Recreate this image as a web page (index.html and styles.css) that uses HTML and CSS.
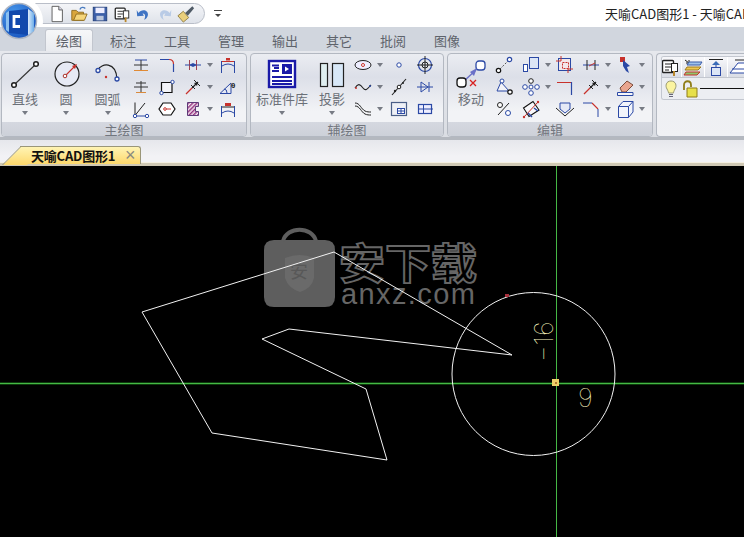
FILE: index.html
```html
<!DOCTYPE html>
<html lang="zh">
<head>
<meta charset="utf-8">
<title>天喻CAD图形1 - 天喻CAD</title>
<link rel="stylesheet" href="styles.css">
</head>
<body>
<div class="app">
  <div class="logo">
    <svg width="46" height="42" viewBox="0 0 46 42">
      <defs>
        <radialGradient id="orb" cx="35%" cy="30%" r="80%"><stop offset="0" stop-color="#4a9aec"/><stop offset="1" stop-color="#1450bc"/></radialGradient>
        <linearGradient id="side" x1="0" y1="0" x2="1" y2="0"><stop offset="0" stop-color="#dcebfb"/><stop offset="1" stop-color="#6faee8"/></linearGradient>
        <pattern id="hatch" width="3" height="3" patternUnits="userSpaceOnUse" patternTransform="rotate(45)"><rect width="3" height="3" fill="#f4eaf2"/><rect width="1.500" height="3" fill="#93307f"/></pattern>
      </defs>
      <path d="M30.600 0A24 24 0 0 1 42.200 27H0V0Z" fill="#fff"/>
      <circle cx="19" cy="21" r="17.500" fill="url(#orb)" stroke="#aeb6c4" stroke-width="1.500"/>
      <path d="M6 13L9 11V32L6 30Z" fill="#8cc0ef"/>
      <path d="M9 11L28 9V35L9 33Z" fill="#1249ad"/>
      <path d="M28 9L34 13V31L28 35Z" fill="url(#side)"/>
      <path d="M20 16.500H14V26.500H20" fill="none" stroke="#fff" stroke-width="2.800"/>
    </svg>
  </div>
  <header class="title-bar">
    <div class="qat">
      <svg viewBox="0 0 20 20"><path d="M4.500 1.500H12L16 5.500V18.500H4.500Z" fill="#fff" stroke="#555"/><path d="M12 1.500V5.500H16" fill="#dde" stroke="#555"/></svg>
      <svg viewBox="0 0 20 20"><path d="M2 6H7L9 8H15V17H2Z" fill="#d9a63c" stroke="#8d6a1d"/><path d="M4 17L7 10H19L16 17Z" fill="#f5d57a" stroke="#8d6a1d"/><path d="M11 5C12 2 15 2 17 4" fill="none" stroke="#4a7cc0" stroke-width="1.500"/></svg>
      <svg viewBox="0 0 20 20"><rect x="2.500" y="2.500" width="15" height="15" fill="#3c5fa8" stroke="#24407c"/><rect x="5" y="3" width="10" height="6" fill="#eef"/><rect x="6" y="12" width="8" height="5" fill="#bcc7dc"/></svg>
      <svg viewBox="0 0 20 20"><rect x="2.500" y="3.500" width="11" height="12" rx="1" fill="#fff" stroke="#222" stroke-width="1.400"/><path d="M5 7H11M5 10H11M5 13H9" stroke="#222"/><rect x="11.500" y="6.500" width="6" height="8" fill="#fff" stroke="#222"/><path d="M14 14V19" stroke="#b8862b" stroke-width="2"/></svg>
      <svg viewBox="0 0 20 20"><path d="M5 9C8 4 16 5 15.500 11C15 14 13 16 11 16.500C13 14 13 9 9.500 9.500L11 12L3.500 12.500L3 5.500Z" fill="#3f74c4"/></svg>
      <svg viewBox="0 0 20 20"><path d="M15 9C12 4 4 5 4.500 11C5 14 7 16 9 16.500C7 14 7 9 10.500 9.500L9 12L16.500 12.500L17 5.500Z" fill="#b9cbe6"/></svg>
      <svg viewBox="0 0 20 20"><path d="M1 12L7 7L13 14L7 19Z" fill="#e9cf7c" stroke="#8f7d42"/><path d="M9 9L17 1.500L19 3.500L12 12Z" fill="#4f5a66"/></svg>
    </div>
    <span class="qat-more"><span class="qat-caret"></span></span>
    <h1 class="title">天喻CAD图形1 - 天喻CAD</h1>
  </header>
  <nav class="tabs">
    <span class="tab active">绘图</span>
    <span class="tab">标注</span>
    <span class="tab">工具</span>
    <span class="tab">管理</span>
    <span class="tab">输出</span>
    <span class="tab">其它</span>
    <span class="tab">批阅</span>
    <span class="tab">图像</span>
  </nav>
  <section class="ribbon">
    <div class="group g1">
      <div class="group-body">
        <div class="big w46">
          <svg width="36" height="32" viewBox="0 0 36 32"><path d="M8 25L28 6" stroke="#333" stroke-width="1.100"/><circle cx="29" cy="5" r="2.300" fill="#fff" stroke="#222" stroke-width="1.500"/><circle cx="7" cy="26" r="2.300" fill="#fff" stroke="#222" stroke-width="1.500"/></svg>
          <span class="big-label">直线</span><span class="caret"></span>
        </div>
        <div class="big w36">
          <svg width="36" height="32" viewBox="0 0 36 32"><circle cx="19" cy="15" r="12" fill="#e6e9f4" stroke="#222" stroke-width="1.200"/><path d="M18 16L27 7" stroke="#c8322c" stroke-width="1.100"/><path d="M29 5L24 7L27 10Z" fill="#c8322c"/><circle cx="17" cy="17" r="1.800" fill="#fff" stroke="#a8332c"/></svg>
          <span class="big-label">圆</span><span class="caret"></span>
        </div>
        <div class="big w47">
          <svg width="36" height="32" viewBox="0 0 36 32"><path d="M8 11C11 4 26 2 27 20" fill="none" stroke="#222" stroke-width="1.200"/><circle cx="8" cy="11.500" r="2" fill="#fff" stroke="#2b49a5" stroke-width="1.300"/><circle cx="27" cy="20" r="2" fill="#fff" stroke="#2b49a5" stroke-width="1.300"/><circle cx="16" cy="18" r="1.200" fill="#c8322c"/></svg>
          <span class="big-label">圆弧</span><span class="caret"></span>
        </div>
        <div class="tools tools-g1">
          <div class="t"><svg width="20" height="20" viewBox="0 0 20 20"><path d="M4 5H16" stroke="#2b49a5"/><path d="M3 10H17M10 5V15" stroke="#333"/><path d="M3 15.500H17" stroke="#e08a35" stroke-width="1.200"/></svg></div>
          <div class="t"><svg width="20" height="20" viewBox="0 0 20 20"><path d="M3 4.500H12" stroke="#2b49a5" stroke-width="1.200"/><path d="M12 4.500Q16.500 4.500 16.500 9" fill="none" stroke="#c8322c" stroke-width="1.200"/><path d="M16.500 9V17" stroke="#2b49a5" stroke-width="1.200"/></svg></div>
          <div class="t"><svg width="20" height="20" viewBox="0 0 20 20"><path d="M2 10H18" stroke="#2b49a5"/><path d="M6.500 5V15M13.500 5V15" stroke="#a04050"/><path d="M6 10L10 8V12ZM14 10L10 8V12Z" fill="#2b49a5"/></svg><span class="caret"></span></div>
          <div class="t"><svg width="20" height="20" viewBox="0 0 20 20"><path d="M3.500 6V18M16.500 6V18" stroke="#2b49a5"/><path d="M4 11Q10 7 16 11" fill="none" stroke="#2b49a5"/><path d="M4 6.500H16" stroke="#c8322c"/><rect x="8" y="3" width="4" height="2.500" fill="#c8322c"/></svg></div>
          <div class="t"><svg width="20" height="20" viewBox="0 0 20 20"><path d="M5 6H15M3 10H17" stroke="#333"/><path d="M10 4V15" stroke="#333"/><path d="M5 15.500H15" stroke="#d98a3c" stroke-width="1.200"/></svg></div>
          <div class="t"><svg width="20" height="20" viewBox="0 0 20 20"><path d="M4.500 5.500H15V15.500H4.500Z" fill="#f2f3f8" stroke="#111" stroke-width="1.200"/><circle cx="15.500" cy="5" r="1.700" fill="#fff" stroke="#2b49a5"/><circle cx="4.500" cy="16" r="1.700" fill="#fff" stroke="#2b49a5"/></svg></div>
          <div class="t"><svg width="20" height="20" viewBox="0 0 20 20"><path d="M3 17L9 11" stroke="#c8322c" stroke-width="1.200"/><path d="M9 11L15 5" stroke="#222" stroke-width="1.200"/><path d="M11 3L17 9M8 8L12 12" stroke="#222"/><path d="M15 5L11 6L14 9Z" fill="#222"/></svg><span class="caret"></span></div>
          <div class="t"><svg width="20" height="20" viewBox="0 0 20 20"><path d="M2 16.500L13 6V16.500Z" fill="#e6e9f4" stroke="#2b49a5"/><path d="M9 16Q9 12 6 12" fill="none" stroke="#2b49a5"/><text class="theta" x="13" y="11">θ</text></svg></div>
          <div class="t"><svg width="20" height="20" viewBox="0 0 20 20"><path d="M4 3.500V16.500L14 4" fill="none" stroke="#222"/><path d="M5 17H15" stroke="#2b49a5"/><circle cx="4" cy="17" r="1.700" fill="#fff" stroke="#2b49a5"/><circle cx="16" cy="17" r="1.700" fill="#fff" stroke="#2b49a5"/></svg></div>
          <div class="t"><svg width="20" height="20" viewBox="0 0 20 20"><path d="M6 4H14L18 10L14 16H6L2 10Z" fill="#fff" stroke="#111" stroke-width="1.200"/><path d="M8 10H14" stroke="#c8322c"/><circle cx="8" cy="10" r="1.300" fill="#fff" stroke="#c8322c"/></svg></div>
          <div class="t"><svg width="20" height="20" viewBox="0 0 20 20"><path d="M4.500 3.500H15.500V7.500H12.500V12.500H15.500V16.500H4.500Z" fill="url(#hatch)" stroke="#5d3a78"/></svg><span class="caret"></span></div>
          <div class="t"><svg width="20" height="20" viewBox="0 0 20 20"><path d="M3.500 7V18M16.500 7V18" stroke="#2b49a5"/><path d="M4 8H16" stroke="#222"/><path d="M4 14Q10 10 16 14" fill="none" stroke="#2b49a5"/><rect x="7" y="4" width="6" height="3" fill="#c8322c"/></svg></div>
        </div>
      </div>
      <div class="group-label">主绘图</div>
    </div>
    <div class="group g2">
      <div class="group-body">
        <div class="big w62">
          <svg width="36" height="32" viewBox="0 0 36 32"><rect x="5" y="2" width="26" height="26" fill="#fff" stroke="#1a1aa8" stroke-width="2.400"/><path d="M8 6.500H15M8 12H15M10 9H15M8 18H28M8 22H28M8 25H28" fill="none" stroke="#1a1aa8" stroke-width="2.200"/><path d="M18 5H28V15H18ZM21 7.500V12.500L25 10Z" fill="#1a1aa8" fill-rule="evenodd"/></svg>
          <span class="big-label">标准件库</span><span class="caret"></span>
        </div>
        <div class="big w38">
          <svg width="36" height="32" viewBox="0 0 36 32"><rect x="6.500" y="4.500" width="7" height="23" fill="#dfeef0" stroke="#222" stroke-width="1.200"/><rect x="18.500" y="4.500" width="11" height="23" fill="#d8e8f8" stroke="#222" stroke-width="1.200"/></svg>
          <span class="big-label">投影</span><span class="caret"></span>
        </div>
        <div class="tools tools-g2">
          <div class="t"><svg width="20" height="20" viewBox="0 0 20 20"><ellipse cx="10" cy="10" rx="8" ry="4.500" fill="#eef" stroke="#222"/><circle cx="10" cy="10" r="1.500" fill="#fff" stroke="#c8322c"/></svg><span class="caret"></span></div>
          <div class="t"><svg width="20" height="20" viewBox="0 0 20 20"><circle cx="10" cy="10" r="2.200" fill="#fff" stroke="#2b49a5"/></svg></div>
          <div class="t"><svg width="20" height="20" viewBox="0 0 20 20"><circle cx="10" cy="10" r="6.500" fill="none" stroke="#2b49a5" stroke-width="1.200"/><circle cx="10" cy="10" r="3" fill="none" stroke="#222"/><path d="M10 1V19M2 10H18" stroke="#222"/></svg></div>
          <div class="t"><svg width="20" height="20" viewBox="0 0 20 20"><path d="M2 11C5 6 7 7 10 11C13 15 15 11 18 8" fill="none" stroke="#222" stroke-width="1.100"/><circle cx="3" cy="11" r="1" fill="#c8322c"/><circle cx="17" cy="9" r="1" fill="#2b49a5"/></svg><span class="caret"></span></div>
          <div class="t"><svg width="20" height="20" viewBox="0 0 20 20"><path d="M3 18L17 2" stroke="#222" stroke-width="1.100"/><circle cx="10" cy="10" r="1.800" fill="#fff" stroke="#222"/><circle cx="14" cy="6" r="1" fill="#222"/><circle cx="6" cy="14" r="1.200" fill="#222"/></svg></div>
          <div class="t"><svg width="20" height="20" viewBox="0 0 20 20"><path d="M2 10H18" stroke="#2b49a5"/><path d="M6 5L13 10L6 15ZM14 5V15" fill="none" stroke="#2b49a5"/></svg></div>
          <div class="t"><svg width="20" height="20" viewBox="0 0 20 20"><path d="M2 4C7 4 8 10 12 12C14 13 16 13 18 13M2 7C7 7 8 13 12 15C14 16 16 16 18 16" fill="none" stroke="#222"/></svg><span class="caret"></span></div>
          <div class="t"><svg width="20" height="20" viewBox="0 0 20 20"><rect x="2.500" y="3.500" width="15" height="13" fill="#eef0f6" stroke="#4b5f88" stroke-width="1.200"/><rect x="8.500" y="9.500" width="7" height="5" fill="#fff" stroke="#2b49a5"/><path d="M9 12H15M12 10V14" stroke="#2b49a5"/></svg></div>
          <div class="t"><svg width="20" height="20" viewBox="0 0 20 20"><rect x="3.500" y="5.500" width="13" height="9" fill="#eef" stroke="#2b49a5" stroke-width="1.200"/><path d="M3 10H18M8.500 5V15" stroke="#2b49a5"/></svg></div>
        </div>
      </div>
      <div class="group-label">辅绘图</div>
    </div>
    <div class="group g3">
      <div class="group-body">
        <div class="big w46">
          <svg width="36" height="32" viewBox="0 0 36 32"><rect x="23" y="2" width="9" height="9" rx="3" fill="#fff" stroke="#2b49a5" stroke-width="1.300"/><path d="M11 22L23 11" stroke="#6a70c8" stroke-width="1.400"/><path d="M24 9L17 13L21 17Z" fill="#6a70c8"/><rect x="4" y="19" width="9" height="9" rx="3" fill="#fff" stroke="#111" stroke-width="1.300"/><path d="M17 21L23 27M23 21L17 27" stroke="#d82020" stroke-width="1.300"/></svg>
          <span class="big-label">移动</span><span class="caret hidden"></span>
        </div>
        <div class="tools tools-g3">
          <div class="t"><svg width="20" height="20" viewBox="0 0 20 20"><path d="M6 14L14 6" stroke="#555" stroke-dasharray="2 1.500"/><circle cx="4.500" cy="15.500" r="2.200" fill="#fff" stroke="#111" stroke-width="1.200"/><circle cx="15.500" cy="4.500" r="2.200" fill="#fff" stroke="#2b49a5" stroke-width="1.200"/></svg></div>
          <div class="t"><svg width="20" height="20" viewBox="0 0 20 20"><rect x="8.500" y="2.500" width="9" height="11" fill="#dce6f6" stroke="#2b49a5"/><rect x="2.500" y="9.500" width="4" height="7" fill="#fff" stroke="#2b49a5"/></svg><span class="caret"></span></div>
          <div class="t"><svg width="20" height="20" viewBox="0 0 20 20"><rect x="3.500" y="3.500" width="12" height="12" fill="#f3e8ea" stroke="#2b49a5"/><rect x="7.500" y="7.500" width="6" height="6" fill="none" stroke="#c8322c" stroke-dasharray="2 1"/><path d="M1 6H6M6 1V6M13 18V14H18" fill="none" stroke="#c8322c"/></svg></div>
          <div class="t"><svg width="20" height="20" viewBox="0 0 20 20"><path d="M2 10H18" stroke="#2b49a5"/><path d="M6 5V15M14 5V15" stroke="#222"/><path d="M8 11L14 8" stroke="#c8322c"/></svg><span class="caret"></span></div>
          <div class="t"><svg width="20" height="20" viewBox="0 0 20 20"><path d="M5 2H10V7H5Z" fill="#c8322c"/><path d="M8 5L15 11L12 12L14 18L11 16L8 11Z" fill="#2b49a5"/></svg><span class="caret"></span></div>
          <div class="t"><svg width="20" height="20" viewBox="0 0 20 20"><path d="M7 5L3 14H15Z" fill="#f2f3f8" stroke="#2b49a5"/><circle cx="8" cy="4" r="2" fill="#fff" stroke="#2b49a5"/><circle cx="16" cy="15" r="2.200" fill="#fff" stroke="#111" stroke-width="1.200"/></svg></div>
          <div class="t"><svg width="20" height="20" viewBox="0 0 20 20"><circle cx="10" cy="10" r="2" fill="#fff" stroke="#2b49a5"/><circle cx="10" cy="4" r="2.300" fill="#fff" stroke="#222"/><circle cx="10" cy="16" r="2.300" fill="#fff" stroke="#2b49a5"/><circle cx="4" cy="10" r="2.300" fill="#fff" stroke="#2b49a5"/><circle cx="16" cy="10" r="2.300" fill="#fff" stroke="#2b49a5"/></svg><span class="caret"></span></div>
          <div class="t"><svg width="20" height="20" viewBox="0 0 20 20"><path d="M2 5.500H16" stroke="#c8322c" stroke-width="1.200"/><path d="M16.500 5V18" stroke="#2b49a5" stroke-width="1.200"/></svg></div>
          <div class="t"><svg width="20" height="20" viewBox="0 0 20 20"><path d="M3 17L9 11" stroke="#c8322c" stroke-width="1.200"/><path d="M9 11L15 5" stroke="#222" stroke-width="1.200"/><path d="M11 3L17 9M8 8L12 12" stroke="#222"/><path d="M15 5L11 6L14 9Z" fill="#222"/></svg><span class="caret"></span></div>
          <div class="t"><svg width="20" height="20" viewBox="0 0 20 20"><path d="M5 11L12 4L18 8L11 15H7Z" fill="#e9a58f" stroke="#7a4a3a"/><path d="M2.500 18.500H18V15.500H2.500Z" fill="#f6f6fa" stroke="#2b49a5"/></svg><span class="caret"></span></div>
          <div class="t"><svg width="20" height="20" viewBox="0 0 20 20"><path d="M4 16L15 4" stroke="#222"/><circle cx="6" cy="6" r="2.500" fill="#fff" stroke="#222"/><circle cx="14" cy="14" r="2.500" fill="#fff" stroke="#2b49a5"/></svg></div>
          <div class="t"><svg width="20" height="20" viewBox="0 0 20 20"><path d="M2.500 9L12 2.500L18 11L8 17.500Z" fill="#f8f8fb" stroke="#111" stroke-width="1.100"/><path d="M3 18L17 3" stroke="#c8322c"/><path d="M13 9L17 12M7 14L11 18" stroke="#2b49a5" stroke-width="1.500"/><circle cx="3" cy="18" r="1.200" fill="#c8322c"/><circle cx="17" cy="3" r="1.200" fill="#c8322c"/></svg></div>
          <div class="t"><svg width="20" height="20" viewBox="0 0 20 20"><path d="M5 4H15V10L10 14L5 10Z" fill="#e6eaf6" stroke="#2b49a5"/><path d="M1 9L10 17L19 9" fill="none" stroke="#222"/></svg></div>
          <div class="t"><svg width="20" height="20" viewBox="0 0 20 20"><path d="M2 4H11" stroke="#2b49a5"/><path d="M11 4L17 10" stroke="#c8322c" stroke-width="1.100"/><path d="M17 10V18" stroke="#2b49a5"/></svg><span class="caret"></span></div>
          <div class="t"><svg width="20" height="20" viewBox="0 0 20 20"><path d="M3.500 7.500H13.500V18.500H3.500ZM3.500 7.500L8 2.500H18V13L13.500 18.500M13.500 7.500L18 2.500" fill="#f1f4fb" stroke="#2b49a5"/></svg><span class="caret"></span></div>
        </div>
      </div>
      <div class="group-label">编辑</div>
    </div>
    <div class="group g4">
      <div class="layer-box">
        <div class="layer-row">
          <span class="layer-btn"><svg width="20" height="20" viewBox="0 0 20 20"><rect x="2.500" y="3.500" width="11" height="12" rx="1" fill="#fff" stroke="#222" stroke-width="1.400"/><path d="M5 7H11M5 10H11M5 13H9" stroke="#222"/><rect x="11.500" y="6.500" width="6" height="8" fill="#fff" stroke="#222"/><path d="M14 14V19" stroke="#b8862b" stroke-width="2"/></svg></span>
          <span class="layer-btn"><svg width="20" height="20" viewBox="0 0 20 20"><path d="M2 3L6 6M6 3V6H3" fill="none" stroke="#222"/><path d="M6 5H19L17 8H4Z" fill="#9fc3ec" stroke="#3a5ca8"/><path d="M4 10H18L15 13H2Z" fill="#f0c850" stroke="#9c7b1e"/><path d="M3 15H17L14 18H1Z" fill="#8dc66c" stroke="#c8322c"/></svg></span>
          <span class="layer-btn"><svg width="20" height="20" viewBox="0 0 20 20"><path d="M3 2.500H17" stroke="#222"/><path d="M10 4L6 8H14Z" fill="#3a6cb8"/><rect x="5.500" y="10.500" width="9" height="8" fill="#dce6f6" stroke="#2b49a5"/><path d="M10 8V11" stroke="#2b49a5"/></svg></span>
          <span class="layer-btn"><svg width="20" height="20" viewBox="0 0 20 20"><path d="M6 3H18" stroke="#222"/><path d="M1 16L9 6H18V16Z" fill="#fff" stroke="#2b49a5"/><path d="M3 12H18" stroke="#2b49a5"/></svg></span>
        </div>
        <div class="layer-row props">
          <svg width="18" height="20" viewBox="0 0 18 20"><path d="M9 2C4 2 3 7 5 10C6 12 6.500 13 6.500 14H11.500C11.500 13 12 12 13 10C15 7 14 2 9 2Z" fill="#fbf4a0" stroke="#9a9a70"/><path d="M7 15.500H11M7 17.500H11" stroke="#667"/></svg>
          <svg width="20" height="20" viewBox="0 0 20 20"><path d="M4 11V6C4 1 11 1 11 6V8" fill="none" stroke="#8f7d18" stroke-width="1.800"/><path d="M7 9H17V18H7Z" fill="#e7e04a" stroke="#8f7d18"/></svg>
          <span class="layer-line"></span>
        </div>
      </div>
    </div>
  </section>
  <div class="doc-strip">
    <div class="doc-tab"><span class="doc-name">天喻CAD图形1</span><span class="doc-close">×</span></div>
  </div>
  <svg class="canvas" width="744" height="371" viewBox="0 166 744 371">
    <g class="mark">
      <path class="bag" d="M274 240H325Q335 240 335 250V297Q335 307 325 307H274Q264 307 264 297V250Q264 240 274 240Z"/>
      <path class="handle" d="M283 241C287 226 312 226 316 241" />
      <path class="shield" d="M285 258Q300 252 314 258V278Q312 288 300 292Q288 288 285 278Z"/>
      <text class="shield-text" x="299" y="278">安</text>
      <text class="mark-cn" transform="translate(339 279) scale(1 .92)">安下载</text>
      <text class="mark-en" x="341" y="304">anxz.com</text>
    </g>
    <line class="guide-glow" x1="0" y1="383.500" x2="744" y2="383.500"/>
    <line class="guide" x1="556.500" y1="166" x2="556.500" y2="537"/>
    <line class="guide" x1="0" y1="383.500" x2="744" y2="383.500"/>
    <polygon class="shape" points="142,312 334,252 512,355 289,329 262,339 366,389 387,460 212,433"/>
    <circle class="shape" cx="533.500" cy="374" r="81.500"/>
    <rect class="endpoint" x="505" y="294" width="4" height="3"/>
    <rect class="snap" x="552" y="379" width="7" height="7"/>
    <rect class="snap-core" x="555" y="382" width="2" height="2"/>
    <text class="dim" transform="translate(553 362) rotate(-90)">−16</text>
    <text class="dim" x="578" y="407">9</text>
  </svg>
</div>
</body>
</html>
```
FILE: styles.css
```css
* { box-sizing: border-box; }
html, body { margin: 0; padding: 0; }
body { width: 744px; height: 537px; overflow: hidden; background: #000; font-family: "Noto Sans CJK SC", "Liberation Sans", sans-serif; }
.app { position: relative; width: 744px; height: 537px; overflow: hidden; }
svg { display: block; flex: none; }

.logo { position: absolute; left: 0; top: 0; z-index: 2; }

.title-bar { height: 27px; background: #fff; display: flex; align-items: center; }
.qat { flex: none; margin-left: 35px; width: 170px; height: 21px; padding-left: 12px; display: flex; align-items: center; gap: 3.500px; background: linear-gradient(#f4f5f8, #dfe3ea); border: 1px solid #b9bec8; border-radius: 0 11px 11px 0; }
.qat svg { width: 18px; height: 18px; }
.qat-more { flex: none; position: relative; width: 8px; margin-left: 9px; height: 8px; border-top: 1px solid #444; }
.qat-caret { position: absolute; left: 1px; top: 3px; width: 0; height: 0; border: 3px solid transparent; border-top-color: #444; border-bottom: 0; }
.title { flex: none; margin: 0 0 0 383px; font-size: 13px; font-weight: 400; color: #222; white-space: nowrap; }

.tabs { height: 24px; padding-left: 45px; display: flex; align-items: flex-end; background: #d1d6de; }
.tab { width: 48px; height: 22px; margin-right: 6px; display: flex; align-items: center; justify-content: center; font-size: 13px; color: #5e636b; }
.tab.active { background: linear-gradient(#f6f7f9, #e9ebef); border: 1px solid #c2c6ce; border-bottom: 0; border-radius: 3px 3px 0 0; color: #5b6068; }

.ribbon { height: 89px; padding: 2px 0 0 1px; display: flex; gap: 3px; background: linear-gradient(#e6e8ed, #dadde3); border-bottom: 3px solid #b4b8bf; }
.group { height: 84px; display: flex; flex-direction: column; background: linear-gradient(#ebedf2 0, #dcdfe8 28%, #f2f3f6 70%); border: 1px solid #b3b8c1; border-radius: 4px; overflow: hidden; }
.g1 { width: 246px; }
.g2 { width: 194px; }
.g3 { width: 206px; }
.g4 { flex: 1; border-right: 0; border-radius: 4px 0 0 4px; background: linear-gradient(#ebedf2, #f0f1f4); }
.group-body { height: 68px; display: flex; }
.group-label { flex: 1; display: flex; align-items: center; justify-content: center; background: linear-gradient(#d5d8e0, #cdd1d9); font-size: 13px; line-height: 1; color: #72767e; }

.big { display: flex; flex-direction: column; align-items: center; flex: none; padding-top: 5px; }
.w46 { width: 46px; }
.w36 { width: 36px; }
.w47 { width: 47px; }
.w62 { width: 62px; }
.w38 { width: 38px; }
.big-label { margin-top: -1px; font-size: 13px; line-height: 18px; color: #6b7078; white-space: nowrap; }
.caret { display: block; width: 0; height: 0; flex: none; border: 3px solid transparent; border-top: 4px solid #777b84; border-bottom: 0; }
.big .caret { margin-top: 3px; }
.hidden { visibility: hidden; }

.tools { display: grid; grid-auto-rows: 22px; }
.tools-g1 { grid-template-columns: 26px 26px 35px 20px; }
.tools-g2 { margin-left: 2px; grid-template-columns: 36px 26px 20px; }
.tools-g3 { grid-template-columns: 27px 34px 26px 34px 30px; }
.t { display: flex; align-items: center; gap: 4px; }
.theta { font-family: "Liberation Sans", sans-serif; font-size: 8px; font-weight: 700; fill: #222; }

.layer-box { margin: 2px 0 0 4px; height: 44px; background: #e4e6ec; border: 1px solid #c3c7cf; border-right: 0; border-radius: 3px 0 0 3px; overflow: hidden; }
.layer-row { height: 21px; display: flex; align-items: center; background: linear-gradient(#f0f1f5, #dde0e7); border-bottom: 1px solid #c3c7cf; }
.layer-btn { flex: none; width: 23px; height: 20px; display: flex; align-items: center; justify-content: center; background: linear-gradient(#f8f8fb, #dadde5); border-right: 1px solid #fff; }
.layer-btn:first-child { margin-left: -3px; }
.props { height: 21px; padding-left: 0; gap: 0; background: #eceef2; border-bottom: 0; }
.layer-line { flex: 1; height: 1px; background: #111; }

.doc-strip { height: 26px; padding: 6px 0 0 20px; background: linear-gradient(#e6e7ec, #f2f2f5 70%); border-bottom: 3px solid #cfc8b4; box-shadow: inset 0 -1px 0 #f4efe0; }
.doc-tab { position: relative; width: 121px; height: 18px; display: flex; align-items: center; padding-left: 11px; background: linear-gradient(#fff4b4, #fdd86c); border: 1px solid #9a9678; border-left: 0; border-bottom: 0; border-radius: 0 3px 0 0; }
.doc-tab::before { content: ""; position: absolute; left: -18px; top: -1px; width: 24px; height: 18px; background: linear-gradient(#fff4b4, #fdd86c); border-left: 1px solid #9a9678; border-top: 1px solid #9a9678; transform: skewX(-45deg); transform-origin: left bottom; }
.doc-name { position: relative; font-size: 13px; font-weight: 700; color: #111; white-space: nowrap; letter-spacing: -.2px; }
.doc-close { position: absolute; left: 105px; top: 0; font-family: "Liberation Sans", sans-serif; font-size: 18px; line-height: 17px; color: #8a8a80; }

.canvas { background: #000; }
.bag { fill: #5e5e5e; }
.handle { fill: none; stroke: #5e5e5e; stroke-width: 4; }
.shield { fill: #6a6a6a; }
.shield-text { font-size: 18px; fill: #585858; text-anchor: middle; }
.mark-cn { font-size: 46px; font-weight: 700; fill: #000; stroke: #666; stroke-width: 2px; }
.mark-en { font-family: "Liberation Sans", sans-serif; font-size: 29px; letter-spacing: 1.400px; fill: #666; }
.guide-glow { stroke: #0c3a0c; stroke-width: 3; }
.guide { stroke: #45b845; stroke-width: 1; }
.shape { fill: none; stroke: #f2f2f2; stroke-width: 1; }
.endpoint { fill: #a8303c; }
.snap { fill: #efcf6a; }
.snap-core { fill: #b07a30; }
.dim { font-family: "Inter", "Liberation Sans", sans-serif; font-weight: 100; font-size: 26px; fill: #fffbc0; }
```
